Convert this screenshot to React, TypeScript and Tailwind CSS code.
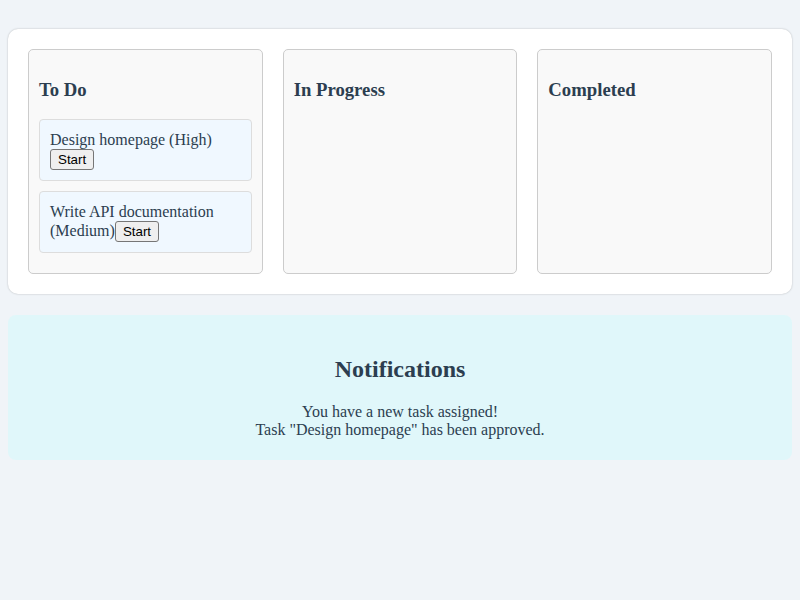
const columns = [
	{
		title: "To Do",
		tasks: [
			{ name: "Design homepage", priority: "High" },
			{ name: "Write API documentation", priority: "Medium" },
		],
	},
	{ title: "In Progress", tasks: [] },
	{ title: "Completed", tasks: [] },
];

const notifications = [
	"You have a new task assigned!",
	'Task "Design homepage" has been approved.',
];

const App = () => {
	return (
		<div
			className="min-h-screen bg-[#f0f4f8] px-2 pt-[29px] text-[#2c3e50] text-base"
			style={{ fontFamily: '"Liberation Serif", "Times New Roman", serif' }}
		>
			<div className="bg-white rounded-[10px] p-5 flex gap-5 shadow-[0_0_2px_rgba(0,0,0,0.25)]">
				{columns.map((col, index) => (
					<div
						key={index}
						className="flex-1 bg-[#f9f9f9] border border-[#cccccc] rounded-[5px] p-[10px]"
					>
						<h3 className="text-[18.72px] font-bold leading-[21.5px] my-[18.72px]">
							{col.title}
						</h3>
						{col.tasks.map((task, i) => (
							<div
								key={i}
								className="bg-[#f0f8ff] border border-[#dddddd] rounded-[4px] p-[10px] mb-[10px] leading-[19px]"
							>
								{task.name} ({task.priority})
								<button
									className="bg-[#efefef] border border-[#767676] rounded-[3px] px-[7px] py-[1px] text-[13.33px] leading-[17px] text-black align-baseline"
									style={{ fontFamily: '"Liberation Sans", Arial, sans-serif' }}
								>
									Start
								</button>
							</div>
						))}
					</div>
				))}
			</div>
			<div className="mt-[21px] bg-[#e0f7fa] rounded-[8px] p-5 text-center">
				<h2 className="text-2xl font-bold leading-[28px] mt-[20px] mb-[20px]">
					Notifications
				</h2>
				{notifications.map((note, i) => (
					<p key={i} className="leading-[18.5px]">
						{note}
					</p>
				))}
			</div>
		</div>
	);
};

export default App;
